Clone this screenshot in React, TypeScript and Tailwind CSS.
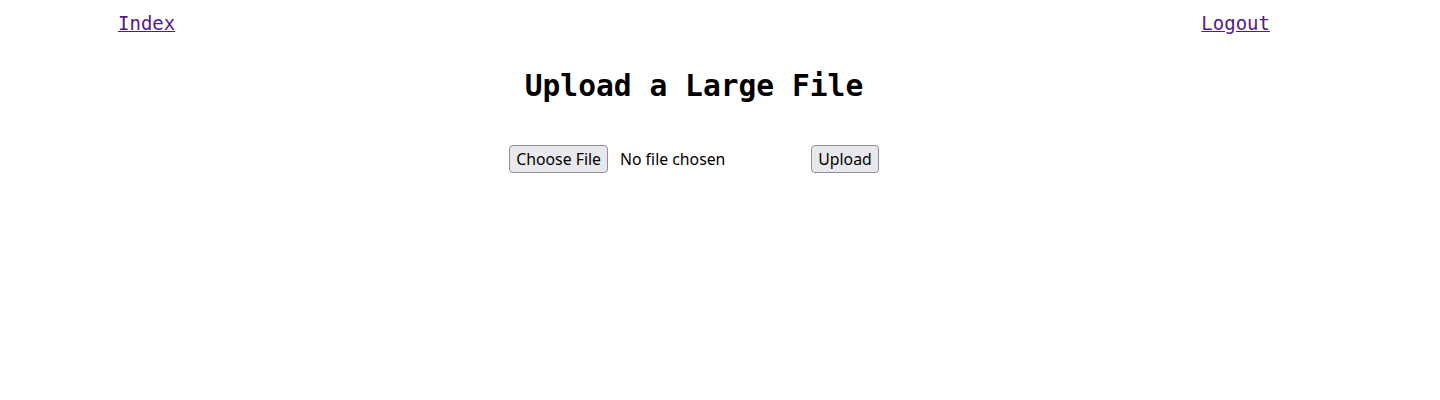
export default function App() {
  return (
    <div className="min-h-[400px] bg-white text-black">
      <div className="ml-[118px] w-[1152px] font-['DejaVu_Sans_Mono',monospace]">
        <nav className="flex justify-between pt-[11px] text-[19px] leading-[24px]">
          <a href="#" className="text-[#551a8b] underline">
            Index
          </a>
          <a href="#" className="text-[#551a8b] underline">
            Logout
          </a>
        </nav>
        <h1 className="mt-[33px] text-center text-[29.6px] font-bold leading-[36px]">
          Upload a Large File
        </h1>
        <form
          className="mt-[41px] flex items-center justify-center font-['Noto_Sans',sans-serif] text-[15.8px] leading-[22px]"
          onSubmit={(e) => e.preventDefault()}
        >
          <input
            type="file"
            className="w-[302px] font-['Noto_Sans',sans-serif] file:mr-[12px] file:rounded-[4px] file:border file:border-solid file:border-[#8f8f9d] file:bg-[#e9e9ed] file:px-[6px] file:py-[2px] file:text-black"
          />
          <button
            type="submit"
            className="rounded-[4px] border border-[#8f8f9d] bg-[#e9e9ed] px-[6px] py-[2px]"
          >
            Upload
          </button>
        </form>
      </div>
    </div>
  );
}
